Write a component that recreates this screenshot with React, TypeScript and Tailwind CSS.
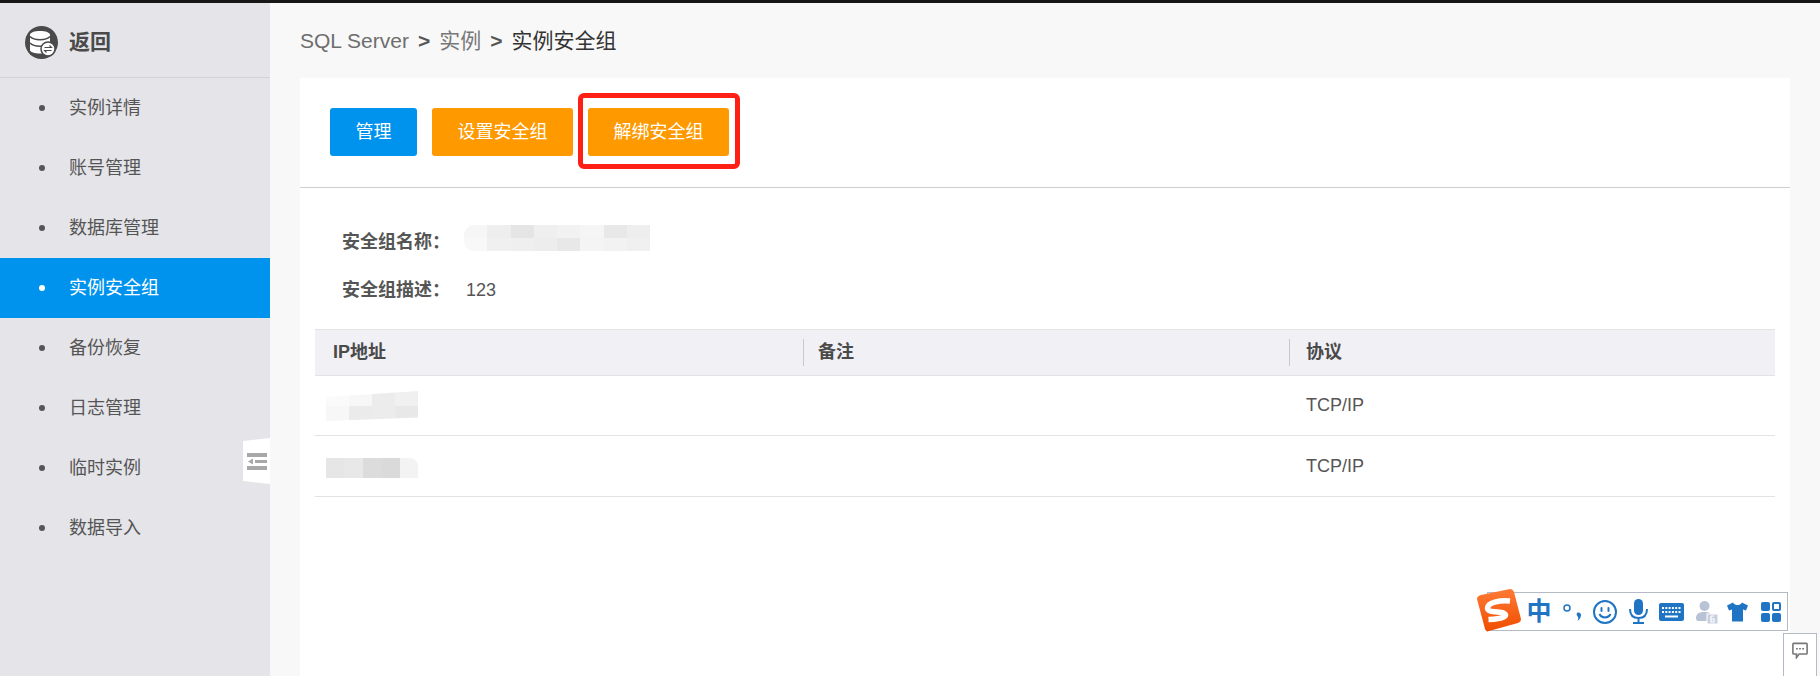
const fontStack = "font-['Liberation_Sans','Noto_Sans_CJK_SC',sans-serif]";

const menuItems = ['实例详情', '账号管理', '数据库管理', '实例安全组', '备份恢复', '日志管理', '临时实例', '数据导入'];

function BackIcon() {
    return (
        <svg width="33" height="33" viewBox="0 0 33 33" className="shrink-0">
            <circle cx="16.5" cy="16.5" r="16.5" fill="#4a4a4a" />
            <path d="M5 9c0-2.500 4.500-4 10-4s10 1.500 10 4v15c0 2-4.500 3.500-10 3.500S5 26 5 24z" fill="#fff" />
            <path d="M5 10.500c2 2.200 6 3.200 10 3.200s8-1 10-3.200M5 17c2 2.200 6 3.200 10 3.200s8-1 10-3.200" fill="none" stroke="#4a4a4a" strokeWidth="1.500" />
            <circle cx="23" cy="23" r="7" fill="#fff" stroke="#4a4a4a" strokeWidth="1.500" />
            <path d="M19.500 21.500h7l-2-2M26.500 24.500h-7l2 2" fill="none" stroke="#4a4a4a" strokeWidth="1.100" />
        </svg>
    );
}

function CollapseHandle() {
    return (
        <div className="absolute left-[243px] top-[435px] flex h-[46px] w-[27px] items-center justify-center bg-white [clip-path:polygon(0_3px,100%_0,100%_100%,0_43px)]">
            <svg width="20" height="20" viewBox="0 0 20 20">
                <rect x="0" y="2" width="20" height="4" fill="#a8a8a8" />
                <rect x="8" y="9" width="12" height="3" fill="#a8a8a8" />
                <path d="M6 7.500v6l-5-3z" fill="#a8a8a8" />
                <rect x="0" y="15" width="20" height="4" fill="#a8a8a8" />
            </svg>
        </div>
    );
}

function Sidebar() {
    return (
        <aside className="relative z-10 w-[270px] shrink-0 bg-[#e4e4e9]">
            <div className="flex h-[75px] items-center gap-[11px] border-b border-[#d3d3d8] pl-[25px] pt-[4px]">
                <BackIcon />
                <span className="text-[21px] font-bold text-[#4a4a4a]">返回</span>
            </div>
            <ul>
                {menuItems.map((item, i) => (
                    <li
                        key={item}
                        className={
                            'flex h-[60px] items-center pl-[39px] text-[18px] ' +
                            (i === 3 ? 'bg-[#0093ee] text-white' : 'text-[#555555]')
                        }
                    >
                        <span className={'mr-[24px] h-[6px] w-[6px] rounded-full ' + (i === 3 ? 'bg-white' : 'bg-[#555555]')} />
                        {item}
                    </li>
                ))}
            </ul>
            <CollapseHandle />
        </aside>
    );
}

function Smudge({ cols, className }: { cols: string[][]; className: string }) {
    return (
        <div className={'flex flex-col overflow-hidden ' + className}>
            {cols.map((row, r) => (
                <div key={r} className="flex flex-1">
                    {row.map((c, i) => (
                        <div key={i} className="flex-1" style={{ background: c }} />
                    ))}
                </div>
            ))}
        </div>
    );
}

function SogouBar() {
    return (
        <div className="absolute left-[1477px] top-[589px] h-[43px] w-[311px]">
            <div className="absolute left-[10px] top-[3px] h-[39px] w-[301px] border border-[#b4bac6] bg-white" />
            <svg width="45" height="43" viewBox="0 0 45 43" className="absolute left-0 top-0">
                <defs>
                    <linearGradient id="sg" x1="0" y1="0" x2="0" y2="1">
                        <stop offset="0" stopColor="#ff7a35" />
                        <stop offset="1" stopColor="#f04d00" />
                    </linearGradient>
                </defs>
                <path d="M4 6L33 0c2 0 3 1 4 3l7 27c0 2-1 3-3 4L12 42c-2 1-3 0-4-2L0 10c0-2 1-3 4-4z" fill="url(#sg)" />
                <path d="M33 12C24 11 11 13 10.500 19c-.3 4.500 11 3.500 16 5 5 2 1 6-15 6.500" fill="none" stroke="#fff" strokeWidth="5.500" />
            </svg>
            <div className="absolute left-[49px] top-[9px] flex items-center text-[#1f74c4]">
                <span className="w-[26px] text-center text-[25px] leading-[27px] font-bold">中</span>
                <svg width="20" height="26" viewBox="0 0 20 26" className="ml-[11px]">
                    <circle cx="4" cy="9" r="3" fill="none" stroke="#1f74c4" strokeWidth="1.500" />
                    <path d="M14 14c2-1 4 0 4 2 0 3-2 5-3.500 6 .8-2 1-3 .5-4-1-1-2-3-1-4z" fill="#1f74c4" />
                </svg>
                <svg width="24" height="24" viewBox="0 0 24 24" className="ml-[10px]">
                    <circle cx="12" cy="12" r="11" fill="none" stroke="#1f74c4" strokeWidth="2" />
                    <rect x="7.500" y="7" width="2" height="5" rx="1" fill="#1f74c4" />
                    <rect x="14.500" y="7" width="2" height="5" rx="1" fill="#1f74c4" />
                    <path d="M6.500 14c2 4.500 9 4.500 11 0" fill="none" stroke="#1f74c4" strokeWidth="2" />
                </svg>
                <svg width="19" height="25" viewBox="0 0 19 25" className="ml-[12px]">
                    <rect x="5" y="0" width="9" height="16" rx="4.500" fill="#1f74c4" />
                    <path d="M1 10c0 6 3.500 9 8.500 9s8.500-3 8.500-9M9.500 19v4M4 24h11" fill="none" stroke="#1f74c4" strokeWidth="2" />
                </svg>
                <svg width="25" height="18" viewBox="0 0 25 18" className="ml-[11px]">
                    <rect width="25" height="18" rx="2" fill="#1f74c4" />
                    <path d="M3 5h19M3 9h19" stroke="#fff" strokeWidth="2" strokeDasharray="2 1.300" />
                    <path d="M6 13.500h13" stroke="#fff" strokeWidth="2" />
                </svg>
                <svg width="23" height="24" viewBox="0 0 23 24" className="ml-[11px]">
                    <circle cx="9.500" cy="6" r="5" fill="#b9c3d6" />
                    <path d="M1 18c0-4 3-6 8-6s7 1 8 4v5H3c-1 0-2-1-2-3z" fill="#b9c3d6" />
                    <rect x="12" y="14" width="11" height="10" fill="#c8d0de" stroke="#fff" />
                    <path d="M16 16h3M16 16v6h3v-3h-3" fill="none" stroke="#fff" strokeWidth="1.200" />
                </svg>
                <svg width="21" height="20" viewBox="0 0 21 19" className="ml-[9px]">
                    <path d="M6 0c1 2 3 2.500 4.500 2.500S14 2 15 0l6 3-2 5-3-1v12H5V7L2 8 0 3z" fill="#1f74c4" />
                </svg>
                <div className="ml-[13px] grid w-[20px] grid-cols-2 gap-[2px]">
                    <div className="h-[9px] rounded-[2px] bg-[#1f74c4]" />
                    <div className="h-[9px] rounded-[2px] border-2 border-[#1f74c4]" />
                    <div className="h-[9px] rounded-[2px] bg-[#1f74c4]" />
                    <div className="h-[9px] rounded-[2px] bg-[#1f74c4]" />
                </div>
            </div>
        </div>
    );
}

function ChatButton() {
    return (
        <div className="absolute left-[1783px] top-[633px] flex h-[43px] w-[34px] justify-center border border-b-0 border-[#b4bac6] bg-white pt-[8px]">
            <svg width="16" height="17" viewBox="0 0 18 18">
                <path d="M2 1h14a1 1 0 0 1 1 1v10a1 1 0 0 1-1 1H8l-3 4v-4H2a1 1 0 0 1-1-1V2a1 1 0 0 1 1-1z" fill="none" stroke="#777" strokeWidth="1.800" />
                <path d="M4.500 7h9" stroke="#777" strokeWidth="1.500" strokeDasharray="2 1.500" />
            </svg>
        </div>
    );
}

function TableRow({ smudge, last }: { smudge: React.ReactNode; last?: boolean }) {
    return (
        <div className={'flex items-center text-[18px] text-[#555555] ' + (last ? 'h-[61px]' : 'h-[60px]') + ' border-b border-[#e3e3e3]'}>
            <div className="h-full w-[489px] pl-[11px]">{smudge}</div>
            <div className="w-[488px]" />
            <div className="pl-[14px]">TCP/IP</div>
        </div>
    );
}

export default function App() {
    return (
        <div className={'relative flex h-[676px] flex-col overflow-hidden bg-[#f8f8f8] ' + fontStack}>
            <div className="h-[3px] shrink-0 bg-[#171717]" />
            <div className="flex min-h-0 flex-1">
                <Sidebar />
                <main className="min-w-0 flex-1">
                    <div className="flex h-[75px] items-center gap-[9px] pt-[1px] pl-[30px] text-[21px]">
                        <span className="text-[#6e6e6e]">SQL Server</span>
                        <span className="font-bold text-[#555555]">&gt;</span>
                        <span className="text-[#777777]">实例</span>
                        <span className="font-bold text-[#555555]">&gt;</span>
                        <span className="text-[#333333]">实例安全组</span>
                    </div>
                    <div className="ml-[30px] h-[598px] w-[1490px] bg-white">
                        <div className="flex h-[110px] items-start gap-[15px] border-b border-[#cfcfcf] pl-[30px] pt-[30px]">
                            <button className="h-[48px] w-[87px] rounded-[3px] bg-[#0093ee] text-[18px] text-white">管理</button>
                            <button className="h-[48px] w-[141px] rounded-[3px] bg-[#ff9900] text-[18px] text-white">设置安全组</button>
                            <div className="relative">
                                <button className="h-[48px] w-[141px] rounded-[3px] bg-[#ff9900] text-[18px] text-white">解绑安全组</button>
                                <div className="absolute -top-[15px] -right-[11px] -bottom-[13px] -left-[10px] rounded-[6px] border-[5px] border-[#ff2015]" />
                            </div>
                        </div>
                        <div className="pl-[42px] pt-[30px] text-[18px] text-[#555555]">
                            <div className="flex h-[48px] items-center">
                                <span className="w-[122px] shrink-0 font-bold">安全组名称：</span>
                                <Smudge
                                    className="relative -top-[4px] h-[26px] w-[186px] rounded-l-[10px]"
                                    cols={[
                                        ['#f6f6f6', '#eeeeee', '#e5e5e5', '#efefef', '#f2f2f2', '#f5f5f5', '#e8e8e8', '#eeeeee'],
                                        ['#f8f8f8', '#f0f0f0', '#efefef', '#ededed', '#e8e8e8', '#f4f4f4', '#f2f2f2', '#f0f0f0'],
                                    ]}
                                />
                            </div>
                            <div className="flex h-[49px] items-center">
                                <span className="w-[124px] shrink-0 font-bold">安全组描述：</span>
                                <span>123</span>
                            </div>
                        </div>
                        <div className="ml-[15px] mt-[14px] w-[1460px]">
                            <div className="flex h-[47px] items-center border-y border-[#e3e3e3] bg-[#f0f0f5] text-[18px] font-bold text-[#4a4a4a]">
                                <div className="w-[488px] pl-[18px]">IP地址</div>
                                <div className="w-[486px] border-l border-[#c8c8c8] pl-[14px]">备注</div>
                                <div className="border-l border-[#c8c8c8] pl-[16px]">协议</div>
                            </div>
                            <TableRow
                                smudge={
                                    <Smudge
                                        className="mt-[15px] h-[30px] w-[92px] [clip-path:polygon(0_20%,100%_0,100%_88%,0_100%)]"
                                        cols={[
                                            ['#fafafa', '#f7f7f7', '#ececec', '#f0f0f0'],
                                            ['#f7f7f7', '#ebebeb', '#ececec', '#e8e8e8'],
                                        ]}
                                    />
                                }
                            />
                            <TableRow
                                last
                                smudge={
                                    <Smudge
                                        className="mt-[22px] h-[20px] w-[92px] rounded-tr-[8px]"
                                        cols={[['#e6e6e6', '#e8e8e8', '#dcdcdc', '#dadada', '#f3f3f3']]}
                                    />
                                }
                            />
                        </div>
                    </div>
                </main>
            </div>
            <SogouBar />
            <ChatButton />
        </div>
    );
}
